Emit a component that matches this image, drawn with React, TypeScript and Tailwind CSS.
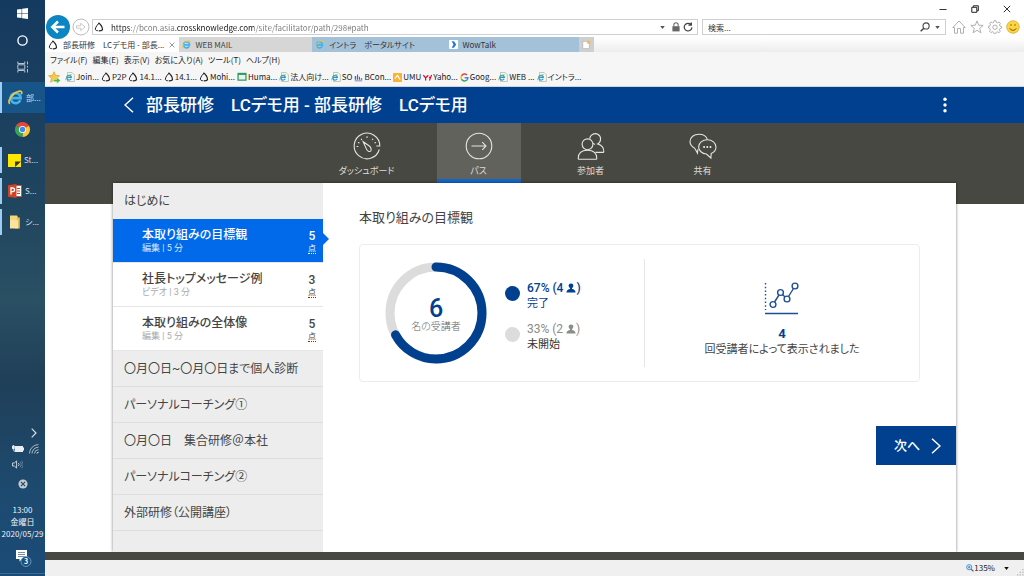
import type { ReactNode } from "react";

const UI = "font-['Noto_Sans_CJK_JP',sans-serif]";

function KnowledgeMark() {
  return (
    <svg viewBox="0 0 12 12" className="size-[10px] shrink-0" fill="none" stroke="#222" strokeWidth="1.200">
      <path d="M6.500 1.300C4.600 2 1.600 6.600 1.600 8.600c0 1.200 1.300 1.700 3 1.900" />
      <path d="M5 1.400c2.600.2 5.400 5.200 5.200 7.400-.2 1.400-2 1.800-4.600 1.700" strokeWidth="1.500" />
    </svg>
  );
}

function IeMark({ size = "size-[10px]" }: { size?: string }) {
  return (
    <svg viewBox="0 0 20 20" className={`${size} shrink-0`} fill="none">
      <path d="M16.300 13.600A6.700 6.700 0 1 1 16.900 10.800H5" stroke="#45b4ea" strokeWidth="3.600" />
      <path d="M2.600 18.500C-1.500 15.600 5 4.800 13.500 2c4.200-1.300 5.600.6 4.400 3.700" stroke="#f3c53a" strokeWidth="2.200" />
    </svg>
  );
}

function IePage() {
  return (
    <svg viewBox="0 0 12 12" className="size-[10px] shrink-0" fill="none">
      <path d="M3 .6h5.500L11.300 3.400v8H3z" fill="#f4f8ef" stroke="#9aa79c" strokeWidth=".7" />
      <path d="M7.400 8A2.800 2.800 0 1 1 7.600 6.400H2.500" stroke="#2f95d6" strokeWidth="1.500" />
      <path d="M.8 10C0 7.500 4 3.500 8 3" stroke="#8bbf3e" strokeWidth=".9" />
    </svg>
  );
}

function GoogleMark() {
  return (
    <svg viewBox="0 0 12 12" className="size-[9px] shrink-0" fill="none" strokeWidth="2">
      <path d="M9.300 2.700A4.600 4.600 0 0 0 2 3.800" stroke="#ea4335" />
      <path d="M2 3.800a4.600 4.600 0 0 0 0 4.400" stroke="#fbbc05" />
      <path d="M2 8.200a4.600 4.600 0 0 0 7.200 1.200" stroke="#34a853" />
      <path d="M9.200 9.400c.9-.9 1.400-2 1.300-3.200H6.200" stroke="#4285f4" />
    </svg>
  );
}

function StarAdd() {
  return (
    <svg viewBox="0 0 14 14" className="size-[13px]">
      <path d="M6.500.8l1.700 3.900 4.200.4-3.200 2.800 1 4.200-3.700-2.200-3.700 2.200 1-4.200L.6 5.100l4.200-.4z" fill="#fcc840" stroke="#d99a26" strokeWidth=".7" />
      <path d="M6 9h3.500V6.800l4 3.400-4 3.400v-2.100H6z" fill="#4db848" stroke="#fff" strokeWidth=".5" />
    </svg>
  );
}

function PersonGlyph() {
  return (
    <svg viewBox="0 0 12 12" className="size-[10px]" fill="currentColor">
      <circle cx="6" cy="3.400" r="2.900" />
      <path d="M4.800 5.500h2.400v1.600c2 .5 4.300 1.200 4.300 4.400H.5c0-3.200 2.300-3.900 4.300-4.400z" />
    </svg>
  );
}

const tabs = [
  { label: "部長研修　LCデモ用 - 部長...", kind: "active" },
  { label: "WEB MAIL", kind: "grey" },
  { label: "イントラ　ポータルサイト", kind: "blue" },
  { label: "WowTalk", kind: "wow" },
];
const tabTone: Record<string, string> = {
  active: "bg-white text-[#333]",
  grey: "bg-[#d6d6d6] text-[#444]",
  blue: "bg-[#a4c1da] text-[#333]",
  wow: "bg-[#a4c1da] text-[#333]",
};

const menus = ["ファイル(F)", "編集(E)", "表示(V)", "お気に入り(A)", "ツール(T)", "ヘルプ(H)"];

const sheet = (
  <svg viewBox="0 0 12 12" className="size-[10px] shrink-0">
    <rect x=".5" y="1" width="11" height="9.500" fill="#2d9a5f" />
    <rect x="2" y="3.500" width="8" height="5.500" fill="#e6f5ec" />
  </svg>
);
const bars = (
  <svg viewBox="0 0 12 12" className="size-[9px] shrink-0" fill="#5b5fa8">
    <path d="M1 9h2V4H1zM4 9h1.500V2H4zM6.500 9H8V5H6.500zM9 9h2V7H9zM1 10h10v1H1z" />
  </svg>
);
const umu = (
  <svg viewBox="0 0 12 12" className="size-[9px] shrink-0">
    <rect width="12" height="12" rx="1" fill="#f9b233" />
    <path d="M2.500 7.500L6 3l3.500 6" stroke="#fff" strokeWidth="1.600" fill="none" />
  </svg>
);
const yahoo = (
  <svg viewBox="0 0 12 12" className="size-[9px] shrink-0" stroke="#e4002b" fill="none" strokeWidth="1.600">
    <path d="M.5 3l3 3.500L7 3M3.500 6.500V10M8.500 5l1 2.500M11.500 2.500l-2 5-.8 2.500" />
  </svg>
);

const favorites: { icon: ReactNode; label: string }[] = [
  { icon: <IePage />, label: "Join..." },
  { icon: <KnowledgeMark />, label: "P2P" },
  { icon: <KnowledgeMark />, label: "14.1..." },
  { icon: <KnowledgeMark />, label: "14.1..." },
  { icon: <KnowledgeMark />, label: "Mohi..." },
  { icon: sheet, label: "Huma..." },
  { icon: <IePage />, label: "法人向け..." },
  { icon: <IePage />, label: "SO" },
  { icon: bars, label: "BCon..." },
  { icon: umu, label: "UMU" },
  { icon: yahoo, label: "Yaho..." },
  { icon: <GoogleMark />, label: "Goog..." },
  { icon: <IePage />, label: "WEB ..." },
  { icon: <IePage />, label: "イントラ..." },
];

function TaskApp({ icon, label, active }: { icon: ReactNode; label: string; active?: boolean }) {
  return (
    <button
      className={`flex w-full items-center gap-[3px] border-l-2 border-[#9fcdf2] pl-[6px] text-[8px] leading-none whitespace-nowrap text-[#d5dfe8] ${active ? "h-[31px] bg-[#175488]" : "h-[26px]"}`}
    >
      {icon}
      <span>{label}</span>
    </button>
  );
}

function Taskbar() {
  return (
    <aside className="flex w-[45px] shrink-0 flex-col items-center bg-[linear-gradient(180deg,#153a5f_0%,#20455f_36%,#2a5064_52%,#203f58_66%,#1d4a6f_85%,#1a4b78_100%)] text-white">
      <button aria-label="Start" className="flex h-[27px] w-full items-center justify-center">
        <svg viewBox="0 0 12 12" className="size-[11px]" fill="#fff">
          <path d="M0 1.700l5-.7v4.700H0zM5.600.9L12 0v5.700H5.600zM0 6.300h5V11l-5-.7zM5.600 6.300H12V12l-6.400-.9z" />
        </svg>
      </button>
      <button aria-label="Cortana" className="flex h-[27px] w-full items-center justify-center">
        <svg viewBox="0 0 12 12" className="size-[11px]" fill="none" stroke="#fff" strokeWidth="1.500">
          <circle cx="6" cy="6" r="5" />
        </svg>
      </button>
      <button aria-label="Task view" className="flex h-[28px] w-full items-center justify-center pb-[3px]">
        <svg viewBox="0 0 12 12" className="size-[12px]" fill="none" stroke="#b4c3d0">
          <path d="M.8.500v2h7v-2M.8 11.500v-2h7v2M.8 3.800h7v4.400h-7zM10.500.500v3M10.500 5v1.500M10.500 8v3.500" />
        </svg>
      </button>
      <TaskApp active icon={<IeMark size="size-[15px]" />} label="部..." />
      <button aria-label="Chrome" className="flex h-8 w-full items-center justify-center">
        <svg viewBox="0 0 20 20" className="size-[15px]">
          <path d="M10 10L1.340 5A10 10 0 0 1 18.660 5z" fill="#e5483a" />
          <path d="M10 10L18.660 5A10 10 0 0 1 10 20z" fill="#fbc934" />
          <path d="M10 10v10A10 10 0 0 1 1.340 5z" fill="#38a552" />
          <circle cx="10" cy="10" r="4.800" fill="#fff" />
          <circle cx="10" cy="10" r="3.700" fill="#4688ec" />
        </svg>
      </button>
      <div className="mt-[2px] flex w-full flex-col gap-[5px]">
        <TaskApp
          label="St..."
          icon={
            <svg viewBox="0 0 12 12" className="size-[13px] shrink-0">
              <path d="M0 0h12v12H0z" fill="#ffe600" />
              <path d="M6.500 12V7H12l-5.500 5z" fill="#333" />
            </svg>
          }
        />
        <TaskApp
          label="S..."
          icon={
            <svg viewBox="0 0 14 14" className="size-[14px] shrink-0">
              <path d="M7 1.500h6.500v11H7z" fill="#fff" stroke="#d04423" strokeWidth=".8" />
              <path d="M9 4.500h3M9 7h3M9 9.500h3" stroke="#d04423" />
              <path d="M0 1.200L8.500 0v14L0 12.800z" fill="#d04423" />
              <path d="M3 10.500V4h1.700a1.700 1.700 0 0 1 0 3.700H3" stroke="#fff" strokeWidth="1.300" fill="none" />
            </svg>
          }
        />
        <TaskApp
          label="シ..."
          icon={
            <svg viewBox="0 0 14 14" className="size-[14px] shrink-0">
              <path d="M2 .5h7l.8 1.500v11H2z" fill="#f5d67a" />
              <path d="M9 2.500h2.800v11H7z" fill="#e7bd55" />
              <path d="M2 13.500h8V5H2z" fill="#fbe3a0" />
            </svg>
          }
        />
      </div>

      <div className="mt-auto flex w-full flex-col items-center">
        <button aria-label="Show hidden icons" className="self-end pr-2">
          <svg viewBox="0 0 6 10" className="h-[10px] w-[6px]" fill="none" stroke="#d5dfe8" strokeWidth="1.200">
            <path d="M.7.7L5 5 .7 9.300" />
          </svg>
        </button>
        <div className="mt-[6px] flex w-full items-center justify-between pr-[6px] pl-3">
          <svg viewBox="0 0 12 8" className="h-[8px] w-[12px]" fill="#e8eef3">
            <path d="M3 1h8v1.500h1v3h-1V7H2.500V4.500H3z" />
            <path d="M0 .8h1V0h.8v.8h1V3c0 .8-.5 1.300-1 1.300H1.500v2H1v-2C.5 4.300 0 3.500 0 3z" />
          </svg>
          <svg viewBox="0 0 10 10" className="size-[10px]" fill="none" stroke="#a6b7c6">
            <path d="M.5 9.500A9 9 0 0 1 9.500.6M3 9.500a6.500 6.500 0 0 1 6.500-6.300M5.500 9.500a4 4 0 0 1 4-3.800" />
            <path d="M8 9.500a1.500 1.500 0 0 1 1.500-1.300" stroke="#fff" />
          </svg>
        </div>
        <svg viewBox="0 0 12 10" className="mt-[6px] ml-3 h-[9px] w-[11px] self-start" fill="none" stroke="#d5dfe8">
          <path d="M.5 3.300h2L5 1v8L2.500 6.700h-2z" />
          <path d="M7 3.500a2 2 0 0 1 0 3" />
          <path d="M8.800 2a4 4 0 0 1 0 6M10.500.8a6 6 0 0 1 0 8.400" stroke="#6d8aa2" />
        </svg>
        <svg viewBox="0 0 12 12" className="mt-[10px] size-[10px]">
          <circle cx="6" cy="6" r="5.500" fill="#c3cbd2" />
          <path d="M3.500 3.500l5 5M8.500 3.500l-5 5" stroke="#284a66" strokeWidth="1.500" />
        </svg>
        <div className="mt-[15px] text-center text-[8px] leading-[12px] whitespace-nowrap text-[#eef3f7]">
          <p>13:00</p>
          <p>金曜日</p>
          <p>2020/05/29</p>
        </div>
        <button aria-label="Notifications" className="mt-[10px] mb-[6px] h-[17px] w-[19px]">
          <svg viewBox="0 0 19 17" className="h-[17px] w-[19px]">
            <path d="M3 0h11v9H9l-2.500 2.500V9H3z" fill="#fff" />
            <path d="M5 2.500h7M5 4.500h7M5 6.500h7" stroke="#507392" strokeWidth=".8" />
            <circle cx="13" cy="11.500" r="5" fill="#1a4f80" stroke="#8fb0cc" strokeWidth=".7" />
            <text x="13" y="14" textAnchor="middle" fontSize="7" fontWeight="700" fill="#fff">3</text>
          </svg>
        </button>
        <div className="mb-[2px] h-px w-full bg-[#3f6a90]" />
      </div>
    </aside>
  );
}

function BrowserChrome() {
  return (
    <div className="bg-white text-[8px] leading-none text-[#222]">
      <div className="flex h-[18px] items-center justify-end gap-6 pr-[13px]">
        <button aria-label="Minimize">
          <svg viewBox="0 0 8 8" className="size-[8px]" stroke="#333"><path d="M.5 4.500h7" /></svg>
        </button>
        <button aria-label="Restore">
          <svg viewBox="0 0 8 8" className="size-[8px]" stroke="#222" fill="none"><path d="M.8 2.300h5v5h-5zM2.300 2V.8h5v5H6" /></svg>
        </button>
        <button aria-label="Close">
          <svg viewBox="0 0 8 8" className="size-[8px]" stroke="#333"><path d="M.8.8l6.400 6.400M7.200.8L.8 7.200" /></svg>
        </button>
      </div>

      <div className="flex h-[18px] items-center pr-1">
        <button aria-label="Back" className="z-10 ml-px size-6 shrink-0">
          <svg viewBox="0 0 24 24" className="size-6">
            <circle cx="12" cy="12" r="12" fill="#0c86c2" />
            <path d="M18.500 12H7M12 6.500L6.300 12l5.700 5.500" stroke="#fff" strokeWidth="2.500" fill="none" />
          </svg>
        </button>
        <button aria-label="Forward" className="ml-[2px] shrink-0">
          <svg viewBox="0 0 18 18" className="size-[18px]" fill="none" stroke="#bdbdbd">
            <circle cx="9" cy="9" r="8" />
            <path d="M4.500 7.800h4.200V5.300L13 9l-4.300 3.700v-2.500H4.500z" strokeWidth=".8" />
          </svg>
        </button>
        <div className="ml-[2px] flex h-4 min-w-0 flex-1 items-center gap-[7px] border border-[#cfcfcf] pr-1 pl-px">
          <KnowledgeMark />
          <input
            aria-label="Address"
            defaultValue="https://bcon.asia.crossknowledge.com/site/facilitator/path/298#path"
            className="h-full min-w-0 flex-1 bg-[linear-gradient(90deg,#222_20px,#777_20px,#777_64px,#111_64px,#111_143px,#777_143px)] bg-clip-text text-transparent outline-none"
          />
          <button aria-label="Address history">
            <svg viewBox="0 0 6 4" className="h-[3px] w-[5px]" fill="#555"><path d="M0 0h6L3 4z" /></svg>
          </button>
          <svg viewBox="0 0 10 12" className="-mr-1 h-[10px] w-[8px]">
            <path d="M2.300 5V3.500a2.700 2.700 0 0 1 5.400 0V5" stroke="#666" strokeWidth="1.300" fill="none" />
            <rect x=".5" y="5" width="9" height="6.500" fill="#666" />
          </svg>
          <button aria-label="Refresh">
            <svg viewBox="0 0 12 12" className="size-[10px]" fill="none" stroke="#444" strokeWidth="1.500">
              <path d="M9.500 3A4.600 4.600 0 1 0 10.700 6.500M10 .5v3.300H6.500" />
            </svg>
          </button>
        </div>
        <label className="ml-1 flex h-4 w-[244px] shrink-0 items-center border border-[#cfcfcf] px-[5px]">
          <input aria-label="検索" placeholder="検索..." className="h-full min-w-0 flex-1 outline-none placeholder:text-[#333]" />
          <svg viewBox="0 0 12 12" className="size-[10px]" fill="none" stroke="#444" strokeWidth="1.300">
            <circle cx="7.300" cy="4.700" r="3.700" />
            <path d="M4.600 7.400L.8 11.200" strokeWidth="1.800" />
          </svg>
          <svg viewBox="0 0 6 4" className="ml-[5px] h-[3px] w-[5px]" fill="#555"><path d="M0 0h6L3 4z" /></svg>
        </label>
        <div className="ml-[6px] flex shrink-0 items-center gap-1">
          <button aria-label="Home">
            <svg viewBox="0 0 14 14" className="size-[14px]" fill="none" stroke="#b0b0b0"><path d="M.8 7.500L7 1l6.200 6.500h-1.700v5.700h-3V8.500h-3v4.700h-3V7.500z" /></svg>
          </button>
          <button aria-label="Favorites">
            <svg viewBox="0 0 14 14" className="size-[14px]" fill="none" stroke="#b0b0b0"><path d="M7 .9l1.700 4.300 4.500.2-3.500 2.900 1.200 4.500L7 10.300l-3.900 2.500 1.200-4.500L.8 5.400l4.500-.2z" /></svg>
          </button>
          <button aria-label="Tools">
            <svg viewBox="0 0 14 14" className="size-[14px]" fill="none" stroke="#b0b0b0">
              <path d="M6 .7h2l.4 1.700 1.200.5 1.500-.9L12.400 3.400l-.9 1.500.5 1.200 1.500.4v1.600l-1.600.6-.5 1.100.9 1.500-1.400 1.400-1.500-.9-1.100.5-.5 1.400H6l-.4-1.500-1.200-.5-1.500.9-1.300-1.400.8-1.500L2 8.600.6 8V6.200L2 5.900l.5-1.200-.8-1.400L3 2l1.500.8 1.100-.4z" />
              <circle cx="7" cy="7.200" r="2.200" />
            </svg>
          </button>
          <button aria-label="Feedback">
            <svg viewBox="0 0 14 14" className="size-[14px]">
              <circle cx="7" cy="7" r="6.300" fill="#fcd53f" stroke="#cfa22e" strokeWidth=".7" />
              <path d="M5 4.200v1.600M9 4.200v1.600M3.700 8.300c1.200 2.600 5.400 2.600 6.600 0" stroke="#7a5a1a" fill="none" />
            </svg>
          </button>
        </div>
      </div>

      <div className="mt-px flex h-[15px] bg-linear-to-b from-white to-[#ededed]">
        <div className="grid w-[534px] grid-cols-4" role="tablist">
          {tabs.map((t) => (
            <button
              key={t.label}
              role="tab"
              aria-selected={t.kind === "active"}
              className={`flex items-center gap-[5px] px-[3px] whitespace-nowrap ${tabTone[t.kind]}`}
            >
              {t.kind === "active" ? (
                <KnowledgeMark />
              ) : t.kind === "wow" ? (
                <svg viewBox="0 0 10 10" className="size-[9px] shrink-0">
                  <rect width="10" height="10" rx="1" fill="#fff" />
                  <path d="M3 1.500h2.500L8 5 5.500 8.500H3L5 5z" fill="#2277cc" />
                </svg>
              ) : (
                <IeMark size="size-[9px]" />
              )}
              <span>{t.label}</span>
              {t.kind === "active" && (
                <svg viewBox="0 0 8 8" className="mr-px ml-auto size-[6px] shrink-0" stroke="#777"><path d="M.8.8l6.400 6.400M7.200.8L.8 7.200" /></svg>
              )}
            </button>
          ))}
        </div>
        <button aria-label="New tab" className="flex w-[15px] items-center justify-center bg-[#cfcfcf]">
          <svg viewBox="0 0 10 10" className="size-[9px]">
            <rect x="1" y="1.500" width="7" height="8" fill="#fff" stroke="#aaa" strokeWidth=".6" />
            <circle cx="7.500" cy="2.500" r="2" fill="#f5b95a" />
          </svg>
        </button>
      </div>

      <div className="border-b border-[#d0d4da] bg-[#f6f6f6]">
        <div className="flex h-4 items-center gap-[5px] pl-[5px]">
          {menus.map((m) => (
            <button key={m} className="whitespace-nowrap">{m}</button>
          ))}
        </div>
        <div className="flex h-[18px] items-center gap-[2px] pl-[3px]">
          <button aria-label="Add to favorites" className="mr-[2px]"><StarAdd /></button>
          {favorites.map((f, i) => (
            <a key={i} href="#" className="flex items-center gap-px whitespace-nowrap">
              {f.icon}
              <span>{f.label}</span>
            </a>
          ))}
        </div>
      </div>
    </div>
  );
}

const sections = [
  { label: "ダッシュボード", icon: "dash" },
  { label: "パス", icon: "path" },
  { label: "参加者", icon: "people" },
  { label: "共有", icon: "share" },
];

const sectionIcons: Record<string, ReactNode> = {
  dash: (
    <>
      <path d="M26.300 17.500A12.800 12.800 0 1 1 26.800 14h-3.500" />
      <path d="M10.200 9.800l5.800 4c1.800 1.400 2.400 3.700 1.800 5.300-1.400.9-3.400.1-4.300-2z" />
      <path d="M14 4.300v1.800M8 6.800l.9 1.100M20 6.800l-.9 1.100M5 10.500l1.500.6M23 10.500l-1.500.6M3.500 14.500h1.800" />
    </>
  ),
  path: (
    <>
      <circle cx="14" cy="14" r="12.800" />
      <path d="M6.500 14h14.500M17.300 10.200L21 14l-3.700 3.800" />
    </>
  ),
  people: (
    <>
      <circle cx="10.500" cy="12.300" r="5.400" />
      <path d="M1.200 26.500c0-5.500 3.200-8.300 9.300-8.300s9.300 2.800 9.300 8.300c0 .5-.3.700-.7.700H1.900c-.5 0-.7-.2-.7-.7z" />
      <path d="M12.800 6.700a5.400 5.400 0 1 1 7.800 5.200c3.900 1.100 6.200 4 6.200 7.500 0 .7-.3 1-.8 1h-7.600M16.300 11.200l1.500 1.500" />
    </>
  ),
  share: (
    <>
      <path d="M8.800 17.300l-.3 3.800-2.800-4.800C2.800 14.800 1 12.500 1 9.600 1 5.300 5 2.200 9.800 2.200c4.300 0 7.700 2.200 8.600 5.500" />
      <path d="M18.300 7.800c4.900 0 8.700 3.100 8.700 7.200 0 3-1.900 5.300-4.800 6.500l-.3 4.500-4.500-4c-4.200-.4-7.800-3.300-7.800-7 0-4.100 3.900-7.200 8.700-7.200z" />
      <path d="M14.300 15h1.600M17.500 15h1.600M20.700 15h1.600" strokeWidth="1.800" />
    </>
  ),
};

const lessons = [
  { title: "本取り組みの目標観", meta: "編集 | 5 分", points: 5, active: true },
  { title: "社長トップメッセージ例", meta: "ビデオ | 3 分", points: 3 },
  { title: "本取り組みの全体像", meta: "編集 | 5 分", points: 5 },
];
const chapters = ["〇月〇日~〇月〇日まで個人診断", "パーソナルコーチング①", "〇月〇日　集合研修＠本社", "パーソナルコーチング②", "外部研修（公開講座）"];

function Sidebar() {
  return (
    <nav className="flex w-[210px] shrink-0 flex-col bg-[#ededed] text-[12px] leading-none text-[#444]">
      <a href="#" className="flex h-9 shrink-0 items-center px-[11px]">はじめに</a>
      {lessons.map((l) => (
        <a
          key={l.title}
          href="#"
          className={`relative flex h-11 shrink-0 items-center justify-between border-b border-[#e6e6e6] pr-[7px] pl-[29px] ${l.active ? "bg-[#006aeb] text-white" : "bg-white"}`}
        >
          <span className="flex flex-col gap-[3px]">
            <span className="font-medium">{l.title}</span>
            <span className={`text-[9px] ${l.active ? "text-[#d9e8fc]" : "text-[#aaa]"}`}>{l.meta}</span>
          </span>
          <span className="flex flex-col items-center gap-[3px] pt-[3px]">
            <span className="font-medium">{l.points}</span>
            <span className="border-b border-dotted border-current text-[8px]">点</span>
          </span>
          {l.active && (
            <svg viewBox="0 0 6 12" className="absolute top-[14px] left-full h-3 w-[6px]" fill="#006aeb"><path d="M0 0l6 6-6 6z" /></svg>
          )}
        </a>
      ))}
      {chapters.map((c) => (
        <a key={c} href="#" className="flex h-9 shrink-0 items-center border-b border-[#dedede] px-[11px] whitespace-nowrap">{c}</a>
      ))}
    </nav>
  );
}

function Donut() {
  const length = 2 * Math.PI * 46;
  return (
    <div className="relative size-[102px] shrink-0">
      <svg viewBox="0 0 102 102" className="size-full" fill="none" strokeWidth="9">
        <circle cx="51" cy="51" r="46" stroke="#dcdcdc" />
        <circle cx="51" cy="51" r="46" stroke="#00408f" strokeLinecap="round" strokeDasharray={`${length * 0.67} ${length}`} transform="rotate(-90 51 51)" />
      </svg>
      <div className="absolute inset-0 flex flex-col items-center justify-center pt-[2px]">
        <span className="text-[25px] leading-[25px] font-medium text-[#00408f]">6</span>
        <span className="text-[10px] leading-[12px] font-light text-[#666]">名の受講者</span>
      </div>
    </div>
  );
}

function Content() {
  return (
    <main className="flex min-w-0 flex-1 flex-col">
      <section className="px-9 pt-[27px]">
        <h2 className="text-[13px] leading-[16px] text-[#444]">本取り組みの目標観</h2>
        <div className="mt-[18px] grid grid-cols-[51fr_49fr] rounded border border-[#ececec] py-[14px]">
          <div className="flex items-center border-r border-[#e6e6e6] pl-[25px]">
            <Donut />
            <ul className="mt-[6px] ml-[18px] flex flex-col gap-[11px] text-[12px] leading-[15px]">
              <li className="flex items-start gap-[7px] text-[#00408f]">
                <span className="mt-[5px] size-[15px] rounded-full bg-[#00408f]" />
                <span>
                  <span className="flex items-center font-medium">67% (4&nbsp;<PersonGlyph />)</span>
                  <span className="block text-[11px]">完了</span>
                </span>
              </li>
              <li className="flex items-start gap-[7px]">
                <span className="mt-[5px] size-[15px] rounded-full bg-[#dcdcdc]" />
                <span>
                  <span className="flex items-center text-[#8c8c88]">33% (2&nbsp;<PersonGlyph />)</span>
                  <span className="block text-[11px] text-[#333]">未開始</span>
                </span>
              </li>
            </ul>
          </div>
          <div className="flex h-[108px] flex-col items-center justify-center pt-3 text-[#00408f]">
            <svg viewBox="0 0 36 34" className="h-[34px] w-[36px]" fill="none" stroke="#1d4f96" strokeWidth="1.400">
              <path d="M1.500 2v27" strokeDasharray="1.500 2.200" />
              <path d="M1 32.500h33" strokeWidth="1.600" />
              <circle cx="9" cy="23.500" r="2.900" />
              <circle cx="16.500" cy="11.500" r="2.900" />
              <circle cx="23" cy="18" r="2.900" />
              <circle cx="31" cy="5" r="2.900" />
              <path d="M10.500 21l4.500-7M18.500 13.500l2.500 2.500M24.500 15.500l5-8" />
            </svg>
            <strong className="mt-[10px] text-[13px] leading-[17px] font-bold">4</strong>
            <p className="text-[11px] leading-[16px] whitespace-nowrap text-[#444]">回受講者によって表示されました</p>
          </div>
        </div>
      </section>
      <button className="mt-11 flex h-[39px] w-[80px] items-center justify-between self-end bg-[#00408f] pr-[15px] pl-[18px] text-[13px] leading-none font-medium text-white">
        次へ
        <svg viewBox="0 0 10 16" className="h-4 w-[10px]" fill="none" stroke="#fff" strokeWidth="1.500"><path d="M1 .8L9 8l-8 7.200" /></svg>
      </button>
    </main>
  );
}

export default function App() {
  return (
    <div className={`flex min-h-screen [font-feature-settings:'palt'] ${UI}`} lang="ja">
      <Taskbar />
      <div className="flex min-w-0 flex-1 flex-col">
        <BrowserChrome />
        <div className="flex flex-1 flex-col bg-white font-['Roboto','Noto_Sans_CJK_JP',sans-serif]">
          <header className="flex h-9 items-center bg-[#00408f] pr-[76px] pl-[79px] text-white">
            <button aria-label="戻る">
              <svg viewBox="0 0 10 16" className="h-4 w-[10px]" fill="none" stroke="#fff" strokeWidth="1.500"><path d="M9 .8L1 8l8 7.200" /></svg>
            </button>
            <h1 className="ml-3 text-[17px] leading-none font-medium">部長研修　LCデモ用 - 部長研修　LCデモ用</h1>
            <button aria-label="メニュー" className="ml-auto">
              <svg viewBox="0 0 6 16" className="h-4 w-[6px]" fill="#fff">
                <circle cx="3" cy="2.300" r="1.700" /><circle cx="3" cy="8" r="1.700" /><circle cx="3" cy="13.700" r="1.700" />
              </svg>
            </button>
          </header>
          <div className="flex justify-center gap-7 bg-[#484842] pb-[21px]">
            {sections.map((s) => (
              <button
                key={s.label}
                className={`flex h-[60px] w-[84px] flex-col items-center border-b-4 pt-[9px] text-[9px] leading-[12px] whitespace-nowrap text-[#dcdcd8] ${s.icon === "path" ? "border-[#1565c8] bg-[#62625c]" : "border-transparent"}`}
              >
                <svg viewBox="0 0 28 28" className="size-[28px] shrink-0" fill="none" stroke="#e4e4e0" strokeWidth="1.100">{sectionIcons[s.icon]}</svg>
                <span className="mt-[5px]">{s.label}</span>
              </button>
            ))}
          </div>
          <div className="-mt-[21px] mx-[68px] flex flex-1 bg-white shadow-[0_0_3px_rgba(0,0,0,0.5)]">
            <Sidebar />
            <Content />
          </div>
          <div className="relative h-2 bg-[#484842]" />
        </div>
        <footer className="flex h-4 items-center justify-end bg-[#f0f0f0] text-[8px] leading-none text-[#222]">
          <button className="flex items-center">
            <svg viewBox="0 0 10 10" className="size-[8px]" fill="none">
              <path d="M6 6l3.300 3.300" stroke="#555" strokeWidth="1.500" />
              <circle cx="4" cy="4" r="3.200" fill="#d7ebfa" stroke="#2f7cc0" />
              <path d="M2.500 4h3M4 2.500v3" stroke="#2f7cc0" />
            </svg>
            135%
            <svg viewBox="0 0 6 4" className="ml-[9px] h-[3px] w-[5px]" fill="#111"><path d="M0 0h6L3 4z" /></svg>
          </button>
          <svg viewBox="0 0 8 8" className="ml-2 size-[7px] self-end" fill="#b5b5b5">
            <path d="M6 0h1.500v1.500H6zM6 3h1.500v1.500H6zM3 3h1.500v1.500H3zM0 6h1.500v1.500H0zM3 6h1.500v1.500H3zM6 6h1.500v1.500H6z" />
          </svg>
        </footer>
      </div>
    </div>
  );
}
